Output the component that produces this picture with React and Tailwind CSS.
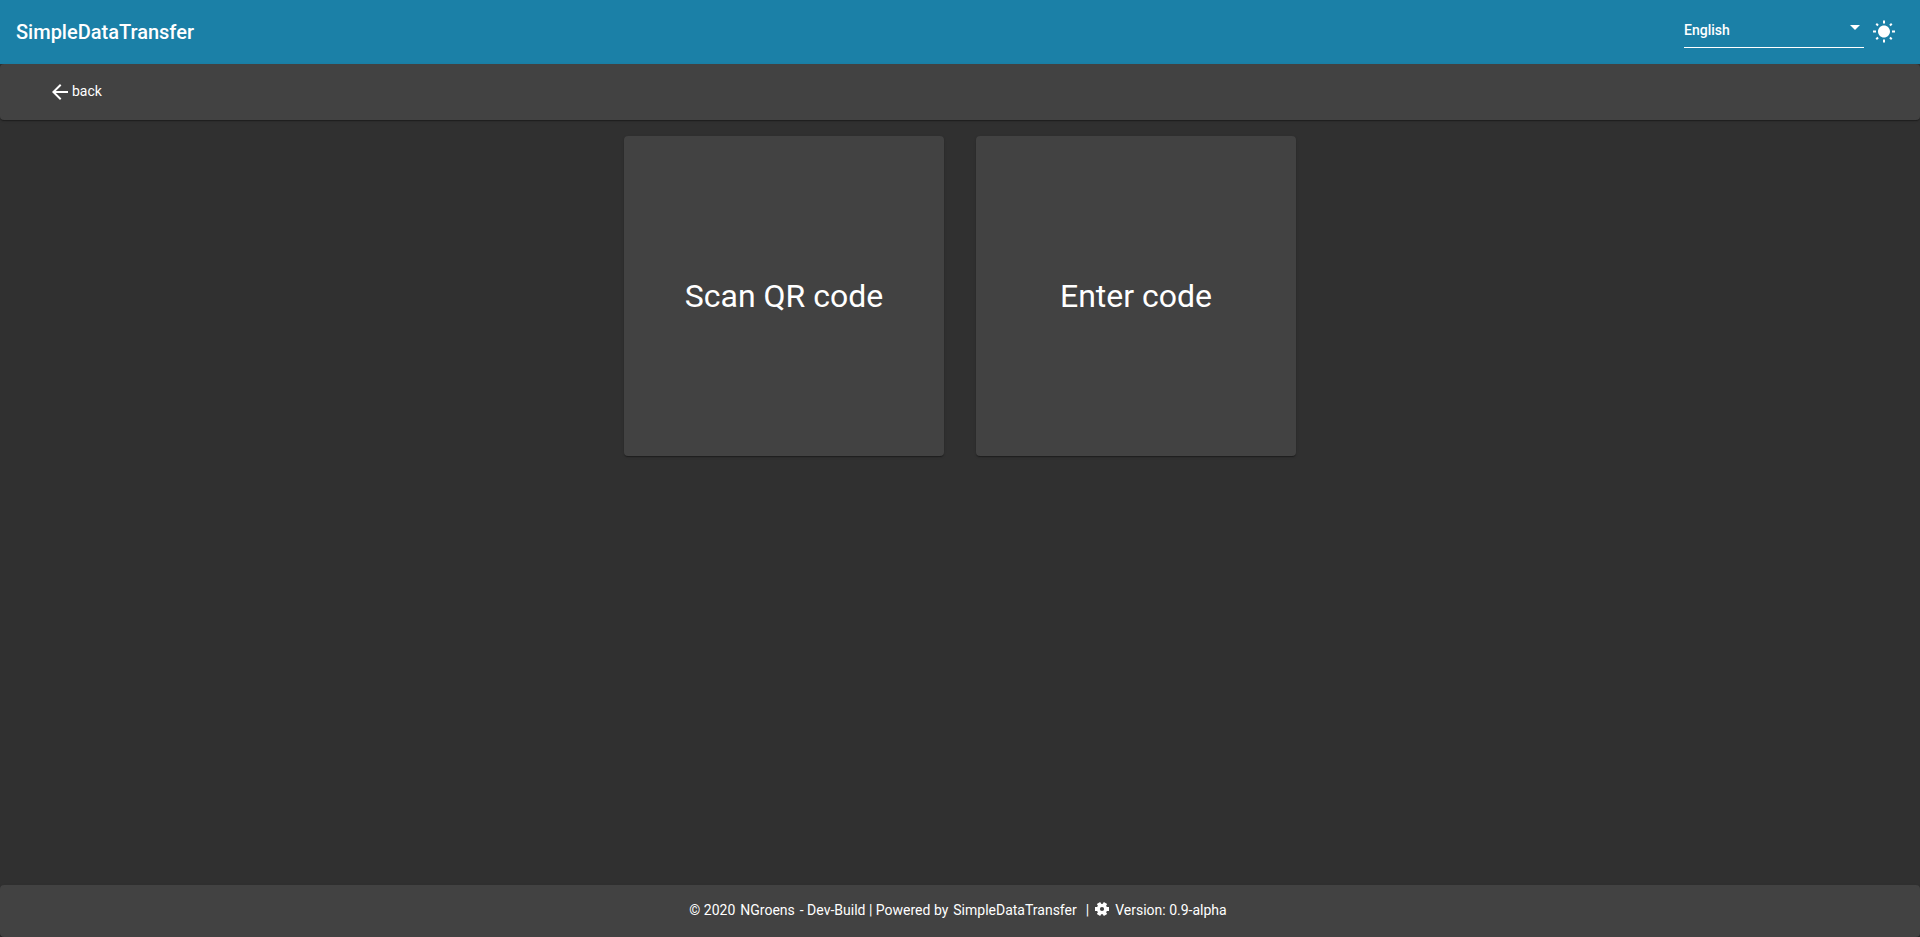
import { useState } from "react";
import { MdArrowBack, MdWbSunny } from "react-icons/md";

const cardShadow =
  "shadow-[0_2px_1px_-1px_rgba(0,0,0,0.2),0_1px_1px_0_rgba(0,0,0,0.14),0_1px_3px_0_rgba(0,0,0,0.12)]";

function GearIcon() {
  return (
    <svg viewBox="0 0 18 18" className="mb-0.5 size-[18px]" aria-hidden="true">
      <g stroke="#fff" strokeWidth="3.8" strokeLinejoin="round">
        <path d="M2 9h14M5.5 2.94l7 12.12M12.5 2.94l-7 12.12" />
      </g>
      <circle cx="9" cy="9" r="5.3" fill="#fff" />
      <circle cx="9" cy="9" r="2.1" fill="#424242" />
    </svg>
  );
}

function Toolbar() {
  const [language, setLanguage] = useState("en");
  return (
    <header className="flex h-16 items-center justify-between bg-[#1b80a7] pr-6 pl-4">
      <h1 className="text-xl font-medium">SimpleDataTransfer</h1>
      <div className="flex items-center gap-2">
        <div className="relative w-[180px]">
          <select
            aria-label="Language"
            value={language}
            onChange={(e) => setLanguage(e.target.value)}
            className="h-8 w-full appearance-none border-b border-white bg-transparent pb-1 text-sm font-medium text-white outline-none"
          >
            <option value="en" className="text-black">English</option>
            <option value="de" className="text-black">Deutsch</option>
          </select>
          <svg viewBox="0 0 10 5" className="pointer-events-none absolute top-[9px] right-1 h-[5px] w-[10px] fill-white" aria-hidden="true">
            <path d="M0 0h10L5 5z" />
          </svg>
        </div>
        <button type="button" aria-label="Toggle theme" className="size-6">
          <MdWbSunny size={24} />
        </button>
      </div>
    </header>
  );
}

function ActionCard({ children }) {
  return (
    <button type="button" className={`size-80 rounded bg-[#424242] pt-0.5 text-[32px] ${cardShadow}`}>
      {children}
    </button>
  );
}

export default function App() {
  return (
    <div className="flex min-h-screen flex-col bg-[#303030] font-['Roboto',sans-serif] text-sm text-white">
      <Toolbar />
      <nav className={`flex h-14 items-center rounded bg-[#424242] px-12 ${cardShadow}`}>
        <a href="#back" className="flex items-center">
          <MdArrowBack size={24} />
          <span className="pb-0.5">back</span>
        </a>
      </nav>
      <main className="flex flex-1 flex-wrap content-start justify-center gap-8 p-4">
        <ActionCard>Scan QR code</ActionCard>
        <ActionCard>Enter code</ActionCard>
      </main>
      <footer className={`flex h-[52px] items-center justify-center gap-1 rounded bg-[#424242] pr-1 pb-0.5 ${cardShadow}`}>
        <div className="flex gap-[5px]">
          <span>© 2020</span>
          <a href="#author">NGroens</a>
          <span>- Dev-Build | Powered by</span>
          <a href="#project">SimpleDataTransfer</a>
        </div>
        <span className="ml-[5px]">|</span>
        <GearIcon />
        <span>Version: 0.9-alpha</span>
      </footer>
    </div>
  );
}
